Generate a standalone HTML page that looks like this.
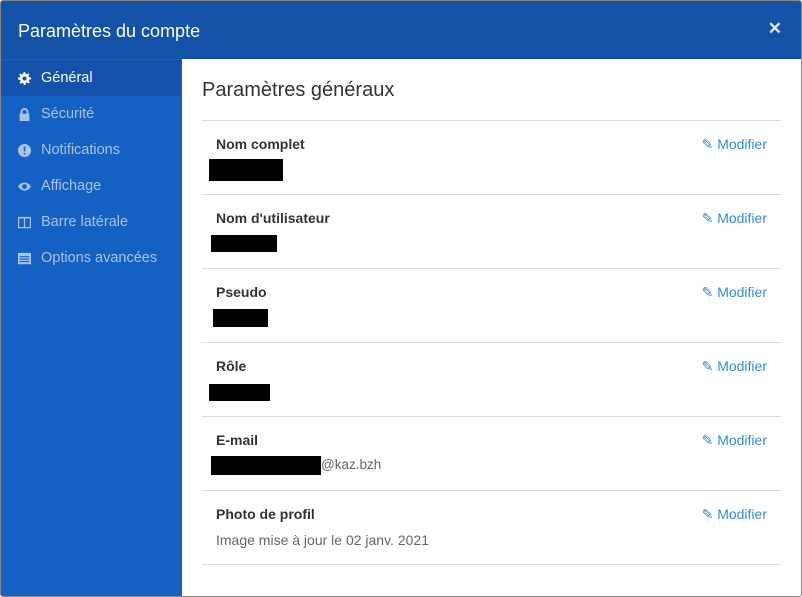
<!DOCTYPE html>
<html><head><meta charset="utf-8"><style>
*{margin:0;padding:0;box-sizing:border-box}
body{width:802px;height:597px;background:#fff;font-family:"Liberation Sans",sans-serif;position:relative;overflow:hidden}
.frame{position:absolute;left:0;top:0;width:802px;height:597px;border:1px solid #888;border-radius:3px;overflow:hidden}
.hdr{position:absolute;left:-1px;top:-1px;width:802px;height:59px;background:#1352a6;color:#fff;font-size:18px;padding:21px 0 0 18px}
.x{position:absolute;right:20px;top:19px;font-size:17px;color:#dfe8f5;font-weight:bold}
.side{position:absolute;left:-1px;top:58px;width:182px;height:539px;background:#1560c3}
.it{height:36px;display:flex;align-items:center;color:#a9c3ea;font-size:14.5px;padding-left:18px}
.it.a{background:#1452ad;color:#fff;margin-top:1px;margin-right:1px}
.it svg{width:13px;height:13px;margin-right:10px;fill:currentColor}
.it.a svg{fill:#fff}
.main{position:absolute;left:201px;top:58px;width:579px}
h1{font-weight:normal;font-size:20px;color:#333;margin-top:20px;height:42px;border-bottom:1px solid #ddd}
.row{height:74px;border-bottom:1px solid #ddd;position:relative}
.lbl{position:absolute;left:14px;top:15px;font-size:14px;font-weight:bold;color:#333}
.mod{position:absolute;right:14px;top:15px;font-size:14px;color:#2d8ed8}
.blk{position:absolute;background:#000}
.val{position:absolute;font-size:13.5px;color:#666}
</style></head><body><div class="frame">
<div class="hdr">Paramètres du compte<span class="x">✕</span></div>
<div class="side">
<div class="it a"><svg viewBox="0 0 16 16"><path d="M7 0h2l.4 2.2 1.4.6 1.9-1.3 1.4 1.4-1.3 1.9.6 1.4L16 7v2l-2.2.4-.6 1.4 1.3 1.9-1.4 1.4-1.9-1.3-1.4.6L9 16H7l-.4-2.2-1.4-.6-1.9 1.3-1.4-1.4 1.3-1.900-.6-1.4L0 9V7l2.2-.4.6-1.4L1.5 3.3l1.4-1.4 1.9 1.3 1.4-.6zM8 5.5a2.5 2.5 0 100 5 2.5 2.5 0 000-5z"/></svg>Général</div>
<div class="it"><svg viewBox="0 0 16 16"><path d="M3 7V5a5 5 0 0110 0v2h1v9H2V7zm2.5 0h5V5a2.5 2.5 0 00-5 0z"/></svg>Sécurité</div>
<div class="it"><svg viewBox="0 0 16 16"><path d="M8 0a8 8 0 110 16A8 8 0 018 0zM7 3v6h2V3zm0 8v2h2v-2z"/></svg>Notifications</div>
<div class="it"><svg viewBox="0 0 16 16"><path d="M8 3c4 0 7 3 8 5-1 2-4 5-8 5s-7-3-8-5c1-2 4-5 8-5zm0 2a3 3 0 100 6 3 3 0 000-6z"/></svg>Affichage</div>
<div class="it"><svg viewBox="0 0 16 16"><path d="M0 1h16v14H0zm1.5 2v10.5h5.7V3zm7.3 0v10.5h5.7V3z"/></svg>Barre latérale</div>
<div class="it"><svg viewBox="0 0 16 16"><path d="M0 1h16v14H0zm2 4v1.5h12V5zm0 3v1.5h12V8zm0 3v1.5h12V11z"/></svg>Options avancées</div>
</div>
<div class="main">
<h1>Paramètres généraux</h1>
<div class="row"><div class="lbl">Nom complet</div><div class="mod">✎ Modifier</div><div class="blk" style="left:7px;top:38px;width:74px;height:22px"></div></div>
<div class="row"><div class="lbl">Nom d'utilisateur</div><div class="mod">✎ Modifier</div><div class="blk" style="left:9px;top:40px;width:66px;height:17px"></div></div>
<div class="row"><div class="lbl">Pseudo</div><div class="mod">✎ Modifier</div><div class="blk" style="left:11px;top:40px;width:55px;height:18px"></div></div>
<div class="row"><div class="lbl">Rôle</div><div class="mod">✎ Modifier</div><div class="blk" style="left:7px;top:41px;width:61px;height:17px"></div></div>
<div class="row"><div class="lbl">E-mail</div><div class="mod">✎ Modifier</div><div class="blk" style="left:9px;top:39px;width:110px;height:19px"></div><div class="val" style="left:119px;top:40px">@kaz.bzh</div></div>
<div class="row"><div class="lbl">Photo de profil</div><div class="mod">✎ Modifier</div><div class="val" style="left:14px;top:41px;font-size:14px">Image mise à jour le 02 janv. 2021</div></div>
</div>
</div></body></html>
